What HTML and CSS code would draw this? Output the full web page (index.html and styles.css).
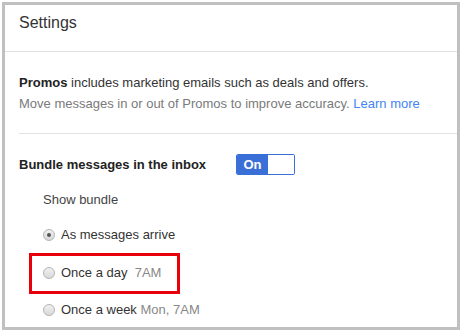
FILE: index.html
```html
<!DOCTYPE html>
<html>
	<head>
		<meta charset="utf-8">
		<title>Settings</title>
		<link rel="stylesheet" href="styles.css">
	</head>
	<body>
	<div class="frame">
		<div class="head">Settings</div>
		<!--promos-->
		<div class="promos">
			<p><b>Promos</b> includes marketing emails such as deals and offers.</p>
			<p class="sub">Move messages in or out of Promos to improve accuracy. <a href="javascript:;">Learn more</a></p>
		</div>
		<!--bundle-->
		<div class="bundle">
			<div class="bundle_row">
				<span class="bundle_label">Bundle messages in the inbox</span>
				<span class="toggle"><span class="toggle_on">On</span><span class="toggle_off"></span></span>
			</div>
			<div class="show">Show bundle</div>
			<ul class="opts">
				<li class="opt"><span class="radio checked"></span>As messages arrive</li>
				<li class="opt mark"><span class="radio"></span>Once a day  <span class="when">7AM</span></li>
				<li class="opt last"><span class="radio"></span>Once a week <span class="when">Mon, 7AM</span></li>
			</ul>
		</div>
	</div>
	</body>
</html>
```

FILE: styles.css
```css
*{margin:0px;padding:0px;list-style:none;box-sizing:border-box;}
body{background:#fff;font-family:"Liberation Sans",Arial,sans-serif;color:#333;}
.frame{width:458px;height:328px;margin:2px;border:3px solid #c0c0c0;background:#fff;overflow:hidden;}
.head{height:47px;padding:8px 14px 0;font-size:16px;line-height:20px;color:#333;border-bottom:1px solid #e2e2e2;}
/*promos*/
.promos{margin-left:14px;padding:20px 0 19px;border-bottom:1px solid #e2e2e2;font-size:13px;line-height:21px;}
.promos b{color:#222;}
.promos .sub{color:#7a7a7a;}
.promos a{color:#4285f4;text-decoration:none;}
/*bundle*/
.bundle{padding:20px 14px 0;font-size:13px;line-height:21px;}
.bundle_row{display:flex;align-items:center;height:21px;}
.bundle_label{width:217px;font-weight:bold;color:#222;}
.toggle{display:flex;width:59px;height:21px;border:1px solid #3b6fd8;border-radius:2px;overflow:hidden;}
.toggle_on{width:31px;background:#3b6fd8;color:#fff;font-weight:bold;font-size:13px;line-height:19px;text-align:center;}
.toggle_off{flex:1;background:#fff;}
.show{margin:14px 0 0 24px;color:#444;}
.opts{margin:14px 0 0 24px;}
.opt{display:flex;align-items:center;height:21px;color:#333;white-space:pre;}
.opt .when{color:#888;}
.radio{width:12px;height:12px;margin-right:6px;border:1px solid #b4b4b4;border-radius:50%;background:linear-gradient(#f0f0f0,#d9d9d9);display:flex;align-items:center;justify-content:center;}
.radio.checked:after{content:"";width:4px;height:4px;border-radius:50%;background:#555;}
.mark{width:151px;height:41px;margin:8px 0 0 -14px;padding:6px 0 8px 11px;border:3px solid #e8000b;}
.last{margin-top:5px;}
```
